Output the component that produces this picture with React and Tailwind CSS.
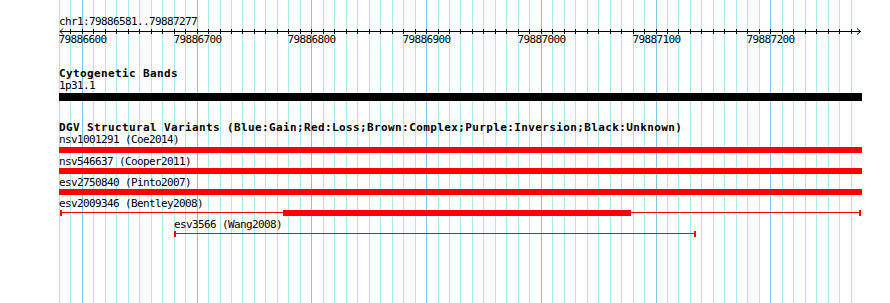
import React from 'react';

// grid lines every 10bp, darker every 100bp
const gridX = Array.from({ length: 70 }, (_, i) => Math.floor(59.4 + i * 11.474));
const majorTicks = [2, 12, 22, 32, 42, 52, 62];
const axisLabels = ['79886600', '79886700', '79886800', '79886900', '79887000', '79887100', '79887200'];

const GridLines = () => (
    <svg className="absolute inset-0" width="890" height="303" shapeRendering="crispEdges">
        {gridX.map((x, i) => (
            <line
                key={i}
                x1={x + 0.5}
                x2={x + 0.5}
                y1="0"
                y2="303"
                stroke={majorTicks.includes(i) ? '#80c6ea' : '#aee8f0'}
                strokeWidth="1"
            />
        ))}
    </svg>
);

const Ruler = () => (
    <div className="relative h-[20px] w-full">
        <svg className="absolute left-0 top-0" width="803" height="7" shapeRendering="crispEdges">
            <line x1="1" x2="802" y1="3.5" y2="3.5" stroke="#000" strokeWidth="1" />
            {gridX.slice(1).map((x, i) => (
                <line key={i} x1={x - 59 + 0.5} x2={x - 59 + 0.5} y1="1" y2="6" stroke="#000" strokeWidth="1" />
            ))}
            <polyline points="4,0.5 1,3.5 4,6.5" fill="none" stroke="#000" strokeWidth="1" shapeRendering="auto" />
            <polyline points="798,0.5 801.5,3.5 798,6.5" fill="none" stroke="#000" strokeWidth="1" shapeRendering="auto" />
        </svg>
        {majorTicks.map((t, i) => (
            <span
                key={t}
                className="absolute top-[6px] -translate-x-1/2 tracking-[-0.62px] whitespace-pre"
                style={{ left: gridX[t] - 59 + 0.5 }}
            >
                {axisLabels[i]}
            </span>
        ))}
    </div>
);

const Label = ({ children, className = '' }) => (
    <div className={`h-[12px] whitespace-pre tracking-[-0.62px] ${className}`}>{children}</div>
);

const Title = ({ children, className = '' }) => (
    <div className={`h-[12px] whitespace-pre font-bold tracking-[0.38px] ${className}`}>{children}</div>
);

export default function App() {
    return (
        <div className="relative h-[303px] w-[890px] overflow-hidden bg-white font-['DejaVu_Sans_Mono',monospace] text-[11px] leading-[12px] text-black">
            <GridLines />
            <div className="relative ml-[59px] flex w-[803px] flex-col pt-[16px]">
                <Label>chr1:79886581..79887277</Label>
                <Ruler />

                <Title className="mt-[20px]">Cytogenetic Bands</Title>
                <Label>1p31.1</Label>
                <div className="mt-[1px] h-[8px] w-full bg-black"></div>

                <Title className="mt-[21px]">
                    DGV Structural Variants (Blue:Gain;Red:Loss;Brown:Complex;Purple:Inversion;Black:Unknown)
                </Title>
                <Label>nsv1001291 (Coe2014)</Label>
                <div className="mt-[1px] h-[6px] w-full bg-[#ff0000]"></div>

                <Label className="mt-[3px]">nsv546637 (Cooper2011)</Label>
                <div className="h-[6px] w-full bg-[#ff0000]"></div>

                <Label className="mt-[3px]">esv2750840 (Pinto2007)</Label>
                <div className="h-[6px] w-full bg-[#ff0000]"></div>

                <Label className="mt-[3px]">esv2009346 (Bentley2008)</Label>
                <div className="relative h-[6px] w-full">
                    <div className="absolute left-[1px] top-[2px] h-[1px] w-[801px] bg-[#ff0000]"></div>
                    <div className="absolute left-[1px] top-0 h-[6px] w-[2px] bg-[#ff0000]"></div>
                    <div className="absolute left-[224px] top-0 h-[6px] w-[348px] bg-[#ff0000]"></div>
                    <div className="absolute left-[800px] top-0 h-[6px] w-[2px] bg-[#ff0000]"></div>
                </div>

                <Label className="mt-[3px] pl-[115px]">esv3566 (Wang2008)</Label>
                <div className="relative h-[6px] w-full">
                    <div className="absolute left-[115px] top-[2px] h-[1px] w-[522px] bg-[#ff0000]"></div>
                    <div className="absolute left-[115px] top-0 h-[6px] w-[2px] bg-[#ff0000]"></div>
                    <div className="absolute left-[635px] top-0 h-[6px] w-[2px] bg-[#ff0000]"></div>
                </div>
            </div>
        </div>
    );
}
